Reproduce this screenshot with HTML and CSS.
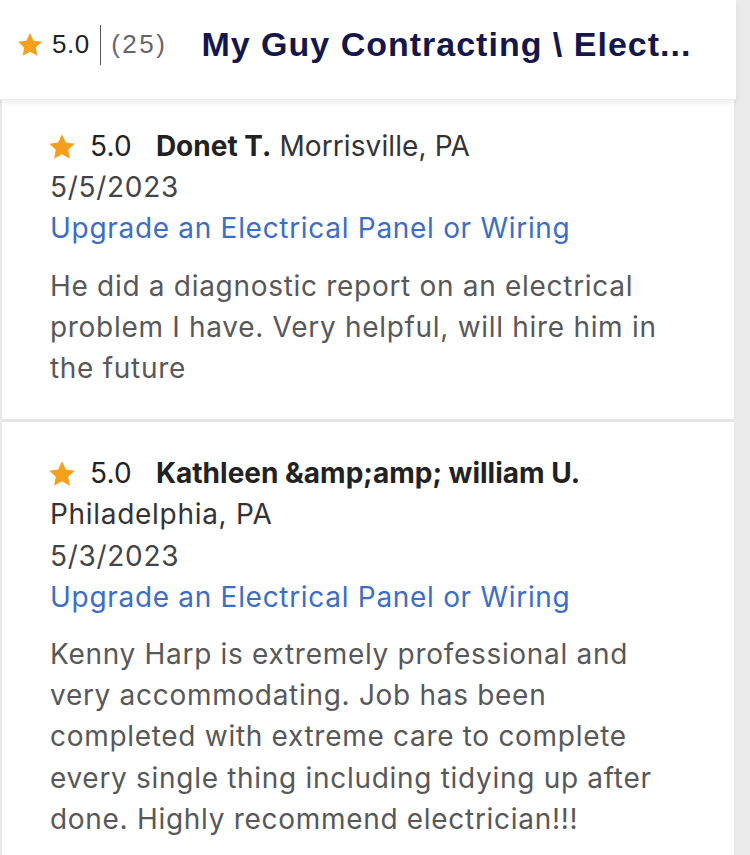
FILE: index.html
```html
<!DOCTYPE html>
<html>
<head>
<meta charset="utf-8">
<link rel="stylesheet" href="styles.css">
</head>
<body>
<div class="page">
  <header class="top">
    <div class="rating">
      <svg class="star-lg" viewBox="0 0 24 24"><path d="M12 1.8l3.1 6.6 7.1.9-5.2 4.9 1.3 7.1L12 17.8l-6.3 3.5 1.3-7.1-5.2-4.9 7.1-.9z" fill="#f5a01a"/></svg>
      <span class="score">5.0</span>
      <span class="divider"></span>
      <span class="count">(25)</span>
    </div>
    <h1 class="title">My Guy Contracting \ Elect...</h1>
  </header>
  <div class="reviews">
    <article class="review first">
      <div class="line head">
        <svg class="star" viewBox="0 0 24 24"><path d="M12 1.8l3.1 6.6 7.1.9-5.2 4.9 1.3 7.1L12 17.8l-6.3 3.5 1.3-7.1-5.2-4.9 7.1-.9z" fill="#f5a01a"/></svg>
        <span class="rscore">5.0</span>
        <span class="name">Donet T.</span> <span class="loc">Morrisville, PA</span>
      </div>
      <div class="line date">5/5/2023</div>
      <div class="line link">Upgrade an Electrical Panel or Wiring</div>
      <p class="body">He did a diagnostic report on an electrical problem I have. Very helpful, will hire him in the future</p>
    </article>
    <article class="review second">
      <div class="line head">
        <svg class="star" viewBox="0 0 24 24"><path d="M12 1.8l3.1 6.6 7.1.9-5.2 4.9 1.3 7.1L12 17.8l-6.3 3.5 1.3-7.1-5.2-4.9 7.1-.9z" fill="#f5a01a"/></svg>
        <span class="rscore">5.0</span>
        <span class="name">Kathleen &amp;amp;amp; william U.</span>
      </div>
      <div class="line loc">Philadelphia, PA</div>
      <div class="line date">5/3/2023</div>
      <div class="line link">Upgrade an Electrical Panel or Wiring</div>
      <p class="body">Kenny Harp is extremely professional and very accommodating. Job has been completed with extreme care to complete every single thing including tidying up after done. Highly recommend electrician!!!</p>
    </article>
  </div>
</div>
</body>
</html>
```

FILE: styles.css
```css
html, body {
  margin: 0;
  padding: 0;
  background: #ebebeb;
}
.page {
  width: 736px;
  min-height: 855px;
  background: #fff;
  display: flex;
  flex-direction: column;
}
.top {
  position: relative;
  z-index: 2;
  height: 100px;
  display: flex;
  align-items: center;
  padding: 0 0 10px 16px;
  background: #fff;
  box-shadow: 0 3px 6px rgba(0,0,0,0.07);
  border-bottom: 1px solid #ececec;
  box-sizing: border-box;
  font-family: "Liberation Sans", Arial, sans-serif;
}
.rating {
  display: flex;
  align-items: center;
}
.star-lg {
  width: 28px;
  height: 28px;
  margin-right: 8px;
}
.score {
  font-size: 26px;
  color: #222;
  letter-spacing: 0.5px;
}
.divider {
  width: 1.5px;
  height: 40px;
  background: #555;
  margin: 0 10px 0 10px;
}
.count {
  font-size: 26px;
  color: #666;
  letter-spacing: 2.5px;
}
.title {
  margin: 0 0 0 34px;
  font-size: 34px;
  font-weight: 700;
  letter-spacing: 1px;
  color: #15164a;
  white-space: nowrap;
}
.reviews {
  flex: 1;
  border-left: 2px solid #e8e8e8;
  border-right: 2px solid #e8e8e8;
  font-family: Inter, "Open Sans", sans-serif;
}
.review {
  padding: 0 62px 0 48px;
}
.review.first {
  padding-top: 26px;
  padding-bottom: 30px;
  border-bottom: 3px solid #e6e6e6;
}
.review.second {
  padding-top: 31px;
  padding-bottom: 20px;
}
.line {
  font-size: 28px;
  letter-spacing: 0.7px;
  line-height: 41.2px;
  color: #444;
  white-space: nowrap;
}
.head {
  display: flex;
  align-items: center;
  color: #222;
}
.star {
  width: 30px;
  height: 30px;
  margin-left: -3px;
  margin-right: 13px;
}
.rscore {
  color: #222;
  margin-right: 24px;
  letter-spacing: 0.2px;
}
.name {
  font-weight: 700;
  color: #222;
  letter-spacing: 0;
  margin-right: 8px;
}
.head .loc {
  letter-spacing: 0.1px;
}
.loc {
  color: #333;
}
.date {
  color: #444;
}
.link {
  color: #3d6dc4;
}
.body {
  margin: 16px 0 0 0;
  font-size: 28px;
  letter-spacing: 0.7px;
  line-height: 41.2px;
  color: #585858;
}
```
